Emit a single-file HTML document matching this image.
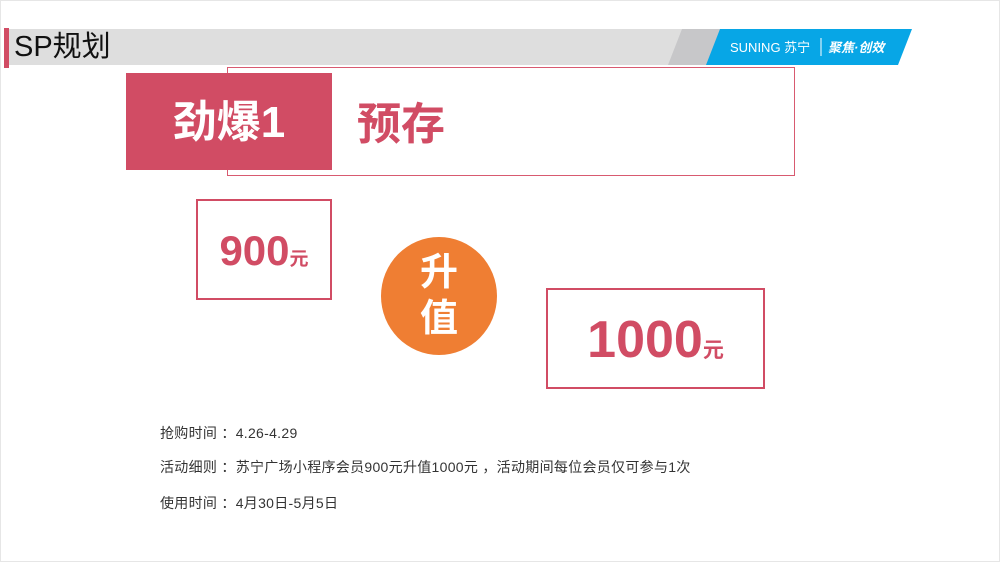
<!DOCTYPE html>
<html><head><meta charset="utf-8"><style>
body{margin:0;width:1000px;height:562px;background:#fff;position:relative;overflow:hidden;font-family:"Liberation Sans","Noto Sans CJK SC",sans-serif}
.a{position:absolute}
.t{font-size:14px;color:#333;line-height:18px;letter-spacing:0.3px;white-space:nowrap}
</style></head><body>
<div class="a" style="left:0;top:0;width:998px;height:560px;border:1px solid #e6e6e6"></div>
<div class="a" style="left:8px;top:29px;width:680px;height:36px;background:#dedede"></div>
<div class="a" style="left:4px;top:28px;width:5px;height:40px;background:#d14c64"></div>
<div class="a" style="left:14px;top:27px;font-size:29px;color:#111;line-height:40px">SP规划</div>
<svg class="a" style="left:660px;top:29px" width="260" height="36">
<polygon points="22,0 62,0 48,36 8,36" fill="#c7c7c9"/>
<polygon points="60,0 252,0 238,36 46,36" fill="#07a6e6"/>
<text x="70" y="23" font-size="13" fill="#fff" font-family="Liberation Sans,sans-serif">SUNING 苏宁</text>
<line x1="161" y1="9" x2="161" y2="27" stroke="#fff" stroke-width="1"/>
<text x="168" y="23" font-size="13" fill="#fff" font-weight="bold" font-style="italic">聚焦·创效</text>
</svg>
<div class="a" style="left:227px;top:67px;width:566px;height:107px;border:1px solid #d85a70"></div>
<div class="a" style="left:126px;top:73px;width:206px;height:97px;background:#d14c64;color:#fff;font-size:44px;font-weight:bold;text-align:center;line-height:100px">劲爆1</div>
<div class="a" style="left:357px;top:100px;font-size:44px;font-weight:bold;color:#d14c64;line-height:50px">预存</div>
<div class="a" style="left:196px;top:199px;width:132px;height:97px;border:2px solid #d14c64;color:#d14c64;font-weight:bold;text-align:center;line-height:100px"><span style="font-size:42px">900</span><span style="font-size:19px">元</span></div>
<div class="a" style="left:381px;top:237px;width:116px;height:118px;border-radius:50%;background:#ef7e33;color:#fff;font-size:38px;font-weight:bold;text-align:center;line-height:46px;padding-top:13px;box-sizing:border-box">升<br>值</div>
<div class="a" style="left:546px;top:288px;width:215px;height:97px;border:2px solid #d14c64;color:#d14c64;font-weight:bold;text-align:center;line-height:100px"><span style="font-size:52px">1000</span><span style="font-size:21px">元</span></div>
<div class="a t" style="left:160px;top:424px">抢购时间 ：4.26-4.29</div>
<div class="a t" style="left:160px;top:458px">活动细则 ：苏宁广场小程序会员900元升值1000元 ，活动期间每位会员仅可参与1次</div>
<div class="a t" style="left:160px;top:494px">使用时间 ：4月30日-5月5日</div>
</body></html>
